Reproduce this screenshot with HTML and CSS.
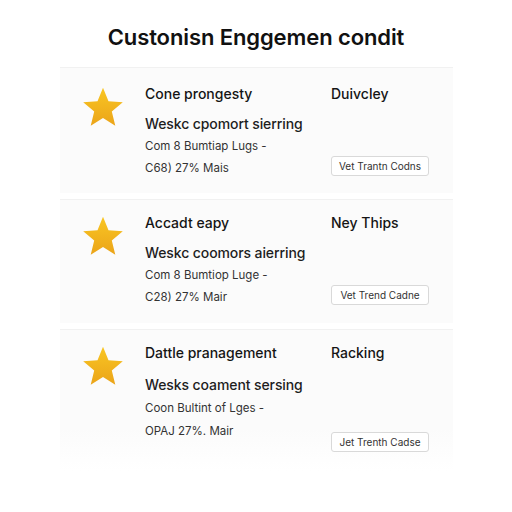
FILE: index.html
```html
<!DOCTYPE html>
<html lang="en">
<head>
    <meta charset="UTF-8">
    <meta name="viewport" content="width=device-width, initial-scale=1.0">
    <title>Customisn Enggemen condit</title>
    <link rel="stylesheet" href="styles.css">
</head>
<body>
    <h1 class="title">Custonisn Enggemen condit</h1>

    <div class="list">
        <div class="card">
            <div class="star">
                <svg viewBox="0 0 24 24" width="44" height="44"><defs><linearGradient id="g1" x1="0" y1="0" x2="0" y2="1"><stop offset="0" stop-color="#f9c623"/><stop offset="1" stop-color="#eba419"/></linearGradient></defs><path d="M12 1.5l3 7.3 7.8.6-6 5.1 1.9 7.7L12 18l-6.7 4.2 1.9-7.7-6-5.1 7.8-.6z" fill="url(#g1)"/></svg>
            </div>
            <div class="info">
                <div class="name">Cone prongesty</div>
                <div class="sub">Weskc cpomort sierring</div>
                <div class="line">Com 8 Bumtiap Lugs -</div>
                <div class="line">C68) 27% Mais</div>
            </div>
            <div class="side">
                <div class="name">Duivcley</div>
                <button class="btn">Vet Trantn Codns</button>
            </div>
        </div>

        <div class="card">
            <div class="star">
                <svg viewBox="0 0 24 24" width="44" height="44"><path d="M12 1.5l3 7.3 7.8.6-6 5.1 1.9 7.7L12 18l-6.7 4.2 1.9-7.7-6-5.1 7.8-.6z" fill="url(#g1)"/></svg>
            </div>
            <div class="info">
                <div class="name">Accadt eapy</div>
                <div class="sub">Weskc coomors aierring</div>
                <div class="line">Com 8 Bumtiop Luge -</div>
                <div class="line">C28) 27% Mair</div>
            </div>
            <div class="side">
                <div class="name">Ney Thips</div>
                <button class="btn">Vet Trend Cadne</button>
            </div>
        </div>

        <div class="card card-last">
            <div class="star">
                <svg viewBox="0 0 24 24" width="44" height="44"><path d="M12 1.5l3 7.3 7.8.6-6 5.1 1.9 7.7L12 18l-6.7 4.2 1.9-7.7-6-5.1 7.8-.6z" fill="url(#g1)"/></svg>
            </div>
            <div class="info">
                <div class="name">Dattle pranagement</div>
                <div class="sub">Wesks coament sersing</div>
                <div class="line">Coon Bultint of Lges -</div>
                <div class="line">OPAJ 27%. Mair</div>
            </div>
            <div class="side">
                <div class="name">Racking</div>
                <button class="btn">Jet Trenth Cadse</button>
            </div>
        </div>
    </div>
</body>
</html>
```

FILE: styles.css
```css
body{
    margin: 0;
    background: #fff;
    font-family: Inter, "Noto Sans", sans-serif;
    color: #1b1b1b;
}
.title{
    margin: 0;
    padding-top: 24px;
    height: 43px;
    text-align: center;
    font-size: 22px;
    font-weight: 600;
    letter-spacing: -0.1px;
    color: #111;
}
.list{
    margin: 0 59px 0 60px;
}
.card{
    display: grid;
    grid-template-columns: 85px 186px 1fr;
    height: 126px;
    padding-top: 17px;
    box-sizing: border-box;
    background: #fbfbfb;
    border-top: 1px solid #f1f1f1;
    margin-bottom: 6px;
}
.card + .card{
    height: 124px;
    padding-top: 14px;
}
.card-last{
    height: 140px;
    padding-top: 17px;
    background: linear-gradient(#fbfbfb 70%, #fff);
}
.card-last.card{
    height: 142px;
}
.star{
    display: flex;
    justify-content: center;
}
.star svg{
    display: block;
}
.name{
    height: 18px;
    line-height: 18px;
    font-size: 14px;
    font-weight: 500;
    color: #151515;
}
.sub{
    margin-top: 12px;
    line-height: 18px;
    font-size: 14px;
    font-weight: 500;
    letter-spacing: -0.1px;
    color: #1e1e1e;
}
.line{
    margin-top: 4px;
    line-height: 18px;
    font-size: 11.5px;
    color: #333;
}
.card-last .sub{
    margin-top: 14px;
}
.card-last .line{
    margin-top: 5px;
}
.side{
    display: flex;
    flex-direction: column;
    align-items: flex-start;
}
.btn{
    margin-top: 53px;
    width: 98px;
    height: 20px;
    padding: 0;
    font-family: inherit;
    font-size: 10px;
    color: #333;
    background: #fff;
    border: 1px solid #d9d9d9;
    border-radius: 3px;
}
.card-last .btn{
    margin-top: 70px;
}
```
